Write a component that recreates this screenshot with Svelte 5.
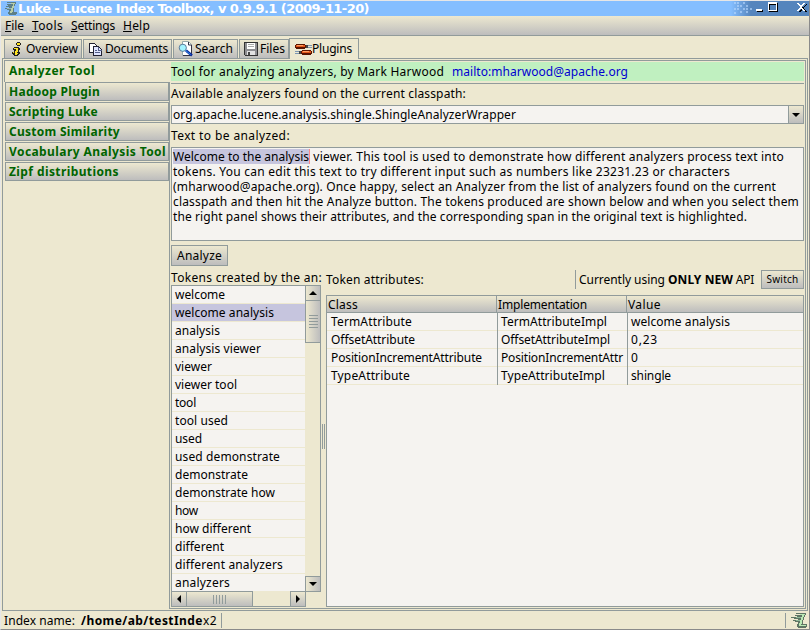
<script>
  const tokens = [
    ['welcome', 50], ['welcome analysis', 99], ['analysis', 45], ['analysis viewer', 86], ['viewer', 37],
    ['viewer tool', 62], ['tool', 21], ['tool used', 53], ['used', 27], ['used demonstrate', 105],
    ['demonstrate', 73], ['demonstrate how', 100], ['how', 23], ['how different', 76], ['different', 49],
    ['different analyzers', 108], ['analyzers', 55],
  ];
  const rows = [
    [['TermAttribute', 81], ['TermAttributeImpl', 106], ['welcome analysis', 99]],
    [['OffsetAttribute', 84], ['OffsetAttributeImpl', 109], ['0,23', 27]],
    [['PositionIncrementAttribute', 151], ['PositionIncrementAttr', 122], ['0', 8]],
    [['TypeAttribute', 79], ['TypeAttributeImpl', 104], ['shingle', 40]],
  ];
  const plugins = [
    ['Analyzer Tool', 86], ['Hadoop Plugin', 91], ['Scripting Luke', 89],
    ['Custom Similarity', 111], ['Vocabulary Analysis Tool', 157], ['Zipf distributions', 110],
  ];
  const lines = [
    [' viewer. This tool is used to demonstrate how different analyzers process text into', 474],
    ['tokens. You can edit this text to try different input such as numbers like 23231.23 or characters', 557],
    ['(mharwood@apache.org). Once happy, select an Analyzer from the list of analyzers found on the current', 603],
    ['classpath and then hit the Analyze button. The tokens produced are shown below and when you select them', 626],
    ['the right panel shows their attributes, and the corresponding span in the original text is highlighted.', 574],
  ];
  const menus = [['File', 19], ['Tools', 31], ['Settings', 44], ['Help', 27]];

  // Tracks a label so that it fills the given width.
  function fit(node, width) {
    const apply = () => {
      node.style.letterSpacing = '0px';
      const natural = node.getBoundingClientRect().width;
      node.style.letterSpacing = `${(width - natural) / node.textContent.length}px`;
    };
    apply();
    document.fonts?.ready.then(apply);
  }
</script>

{#snippet label(text, width)}<span class="t" use:fit={width}>{text}</span>{/snippet}

{#snippet logo(size, dark, mid, light)}
  <svg width={size} height={size} viewBox="0 0 16 16" shape-rendering="crispEdges">
    <path d="M5 0h10v2h-1v2h-1v3h-1v4h4v3h-1v1H7v-1H6v-3h1V9H4V8H2V7h5V6H3V5H0V4h6V3H4V2h5V1H5z" fill={dark} />
    <path d="M9 1h5v1h-1v2h-1v3h-1v4h-1v1h5v1H8v-3h1V7h1V4h1V2H9z" fill={light} />
    <path d="M5 4h5v1H5zM5 7h4v1H5z" fill={mid} />
  </svg>
{/snippet}

<div class="window">
  <header class="title">
    <div class="appicon">{@render logo(14, '#5c7f86', '#8fb3b5', '#b9cfa8')}</div>
    <b>{@render label('Luke - Lucene Index Toolbox, v 0.9.9.1 (2009-11-20)', 351)}</b>
    <svg class="controls" width="75" height="15" viewBox="0 0 75 15" shape-rendering="crispEdges">
      <path d="M0 1h2v2H0zM3 1h2v2H3zM9 1h2v2H9zM3 4h2v2H3zM6 4h2v2H6zM12 4h2v2h-2zM0 7h2v2H0zM3 7h2v2H3zM9 7h2v2H9zM12 7h2v2h-2zM16 7h2v2h-2zM0 11h2v2H0zM6 10h2v2H6zM12 10h2v2h-2z" fill="#b7d9ff" opacity=".6" />
      <path d="M23 9h6v2h-6zM35 2h9v9h-9z" fill="#000" />
      <path d="M22 8h6v2h-6zM34 1h9v9h-9z" fill="#fff" />
      <path d="M35 3h7v6h-7z" fill="#000" /><path d="M36 4h6v5h-6z" fill="#5585bd" />
      <g id="cross"><path d="M64 3h2v1h1v1h1v1h2V5h1V4h1V3h1v1h-1v1h-1v1h-1v2h1v1h1v1h1v1h-2v-1h-1V9h-2v1h-1v1h-2v-1h1V9h1V8h1V6h-1V5h-1V4h-1z" fill="#000" /></g>
      <path d="M63 2h2v1h1v1h2V3h1V2h2v1h-1v1h-1v1h-1v2h1v1h1v1h1v1h-2V9h-1V8h-2v1h-1v1h-2V9h1V8h1V7h1V5h-1V4h-1V3h-1z" fill="#fff" />
    </svg>
  </header>
  <nav class="menu">
    {#each menus as [name, w]}<span class="t" use:fit={w}><u>{name[0]}</u>{name.slice(1)}</span>{/each}
  </nav>

  <div class="tabs">
    <div class="tab overview">
      <svg width="16" height="16" viewBox="0 0 16 16" shape-rendering="crispEdges"><path d="M8 1h3v1h1v2h-1v1H8V4H7V2h1zM5 6h5v1h1v2h-1v2h1v2h-1v1H9v1H5v-1H4v-1H3v-2h2V9H4V7h1z" fill="#222" /><path d="M8 2h3v2H8zM5 7h4v1H5zM7 8h2v3H7zM6 10h2v4H6zM4 11h1v1H4zM8 12h1v1H8z" fill="#ffe420" /></svg>
      {@render label('Overview', 52)}
    </div>
    <div class="tab documents">
      <svg width="16" height="16" viewBox="0 0 16 16" shape-rendering="crispEdges"><path d="M1.500 2.500h5l2 2v7h-7z" fill="#fff" stroke="#223" /><path d="M5.500 5.500h5l3 3v6h-8z" fill="#dfe4ff" stroke="#223" /><path d="M10.500 6v3h3M7 9.500h2M7 11.500h5" fill="none" stroke="#55608a" /></svg>
      {@render label('Documents', 63)}
    </div>
    <div class="tab search">
      <svg width="16" height="16" viewBox="0 0 16 16"><path d="M4.500.5h6l3 3v11h-9z" fill="#fff" stroke="#9aa" /><path d="M10.500 1v3h3v10.500H5" fill="none" stroke="#334" /><circle cx="4.800" cy="6.800" r="3.600" fill="#a4f4ff" stroke="#5a7a9a" /><path d="M8 9.500l6 5" stroke="#0d2c9c" stroke-width="2.600" /><path d="M7.500 9.500l5 4" stroke="#2c8cf0" /></svg>
      {@render label('Search', 38)}
    </div>
    <div class="tab files">
      <svg width="16" height="16" viewBox="0 0 16 16" shape-rendering="crispEdges"><path d="M1.500 1.500h13v13H2.500l-1-1z" fill="#8e8e92" stroke="#333" /><path d="M4 2h8v6H4z" fill="#fff" /><path d="M4 10h8v4H4z" fill="#e2e2e2" /><path d="M5 11h2v3H5z" fill="#444" /><path d="M5 3.500h6M5 5.500h6" stroke="#aaa" /></svg>
      {@render label('Files', 25)}
    </div>
    <div class="tab plugins active">
      <svg width="17" height="16" viewBox="0 0 17 16" shape-rendering="crispEdges"><path d="M1 3h9v1h1v3h-1v1H1V7H0V4h1zM7 9h9v1h1v3h-1v1H7v-1H6v-3h1z" fill="#5a1400" /><path d="M1 4h9v2H1zM7 10h9v2H7z" fill="#e4561a" /><path d="M2 4h6v1H2zM8 10h6v1H8z" fill="#ffa060" /><path d="M11 4h2v3h-2zM4 10h2v3H4z" fill="#444" /><path d="M13 4.500h4M13 6.500h4M0 10.500h4M0 12.500h4" stroke="#7d97b3" /></svg>
      {@render label('Plugins', 40)}
    </div>
  </div>

  <main class="pane">
    <aside>
      {#each plugins as [name, w], i}
        <div class="plugin" class:on={i === 0}>{@render label(name, w)}</div>
      {/each}
    </aside>
    <section class="content">
      <div class="banner">{@render label('Tool for analyzing analyzers, by Mark Harwood', 273)}<a href="mailto:mharwood@apache.org">{@render label('mailto:mharwood@apache.org', 176)}</a></div>
      <div class="rule"></div>
      <div class="caption first">{@render label('Available analyzers found on the current classpath:', 295)}</div>
      <div class="combo"><div>{@render label('org.apache.lucene.analysis.shingle.ShingleAnalyzerWrapper', 343)}</div><button aria-label="Choose analyzer"><svg width="8" height="4" viewBox="0 0 8 4"><path d="M0 0h8L4 4z" /></svg></button></div>
      <div class="caption">{@render label('Text to be analyzed:', 119)}</div>
      <div class="textarea">
        {#each lines as [line, w], i}
          <div>{#if i === 0}<mark>{@render label('Welcome to the analysis', 136)}</mark>{/if}{@render label(line, w)}</div>
        {/each}
      </div>
      <button class="analyze">{@render label('Analyze', 45)}</button>
      <div class="split">
        <div class="left">
          <div class="cut">{@render label('Tokens created by the an:', 151)}</div>
          <div class="list">
            <div class="items">
              {#each tokens as [token, w], i}<div class="item" class:sel={i === 1}>{@render label(token, w)}</div>{/each}
            </div>
            <div class="vbar">
              <button aria-label="Up"><svg width="8" height="4" viewBox="0 0 8 4"><path d="M0 4h8L4 0z" /></svg></button>
              <div class="vthumb"><i></i></div>
              <button class="end" aria-label="Down"><svg width="8" height="4" viewBox="0 0 8 4"><path d="M0 0h8L4 4z" /></svg></button>
            </div>
            <div class="hbar">
              <button aria-label="Left"><svg width="4" height="8" viewBox="0 0 4 8"><path d="M4 0v8L0 4z" /></svg></button>
              <div class="hthumb"><i></i></div>
              <button class="end" aria-label="Right"><svg width="4" height="8" viewBox="0 0 4 8"><path d="M0 0v8l4-4z" /></svg></button>
            </div>
          </div>
        </div>
        <div class="grip"><i></i></div>
        <div class="right">
          <div class="bar">
            {@render label('Token attributes:', 98)}
            <div class="api">{@render label('Currently using ', 89)}<b>{@render label('ONLY NEW', 65)}</b>{@render label(' API', 21)}</div>
            <button class="switch">{@render label('Switch', 32)}</button>
          </div>
          <div class="table">
            <div class="tr head"><div>{@render label('Class', 30)}</div><div>{@render label('Implementation', 89)}</div><div>{@render label('Value', 33)}</div></div>
            {#each rows as row}
              <div class="tr">{#each row as [cell, w]}<div>{@render label(cell, w)}</div>{/each}</div>
            {/each}
          </div>
        </div>
      </div>
    </section>
  </main>

  <footer>
    <div class="index">{@render label('Index name:', 71)}<b class="t" use:fit={136}>/home/ab/testInde<span class="thin">x2</span></b></div>
    <div class="logo">{@render logo(16, '#5f7564', '#8fb898', '#b9e9b4')}</div>
  </footer>
</div>

<style>
  :global(body) { margin: 0; }
  * { box-sizing: border-box; }
  .window { width: 810px; height: 630px; display: flex; flex-direction: column; background: #ede8d0; border: 1px solid #e6e6e6; border-right-color: #8a8a8a; border-bottom-color: #8a8a8a; font: 12px/18px "Noto Sans", "Open Sans", sans-serif; color: #000; overflow: hidden; }
  .t { white-space: pre; display: inline-block; }
  b { font-weight: 700; }
  svg { display: block; flex: none; }
  button { font: inherit; color: inherit; padding: 0; margin: 0; border: 1px solid #919b9b; background: linear-gradient(#ede8d0, #bdbdbd); display: flex; align-items: center; justify-content: center; border-radius: 0; flex: none; }
  .title { height: 15px; flex: none; display: flex; align-items: center; background: linear-gradient(90deg, #84beff 0 730px, #5585bd 750px); color: #fff; font: 13px/15px "DejaVu Sans", sans-serif; }
  .appicon { width: 17px; padding-left: 2px; }
  .title b { flex: 1; }
  .menu { height: 20px; flex: none; display: flex; gap: 8px; padding-left: 4px; border-bottom: 1px solid #919b9b; background: linear-gradient(#ede8d0, #bdbdbd); line-height: 19px; }
  .tabs { height: 22px; flex: none; margin-left: 3px; display: flex; align-items: flex-end; position: relative; z-index: 1; }
  .tab { height: 19px; flex: none; display: flex; align-items: center; gap: 1px; border: 1px solid #919b9b; border-bottom: 0; background: linear-gradient(#ede8d0, #bdbdbd); margin-right: 1px; padding-left: 4px; line-height: 18px; }
  .overview { width: 78px; padding-left: 4px; }
  .documents { width: 89px; padding-left: 4px; }
  .search { width: 65px; padding-left: 4px; }
  .files { width: 50px; padding-left: 3px; gap: 1px; }
  .plugins { width: 70px; gap: 0; height: 21px; margin: 0 0 -1px -1px; padding: 0 0 1px 5px; background: #ede8d0; }
  .pane { height: 553px; flex: none; margin: 0 1px; border: 1px solid #919b9b; padding: 1px; display: flex; }
  aside { width: 165px; flex: none; }
  .plugin { height: 19px; margin: 0 0 1px 1px; border: 1px solid #919b9b; background: linear-gradient(#ede8d0, #bdbdbd); color: #006400; font: bold 12px/17px "Noto Sans", sans-serif; padding-left: 3px; }
  .plugin.on { height: 22px; margin: 0 -1px 0 0; position: relative; background: #ede8d0; border-width: 1px 0 0 1px; line-height: 20px; padding-left: 4px; }
  .content { flex: 1; min-width: 0; border: 1px solid #919b9b; padding: 1px; display: flex; flex-direction: column; }
  .banner { height: 19px; flex: none; background: #c0f0c0; line-height: 19px; }
  .banner a { color: #0000d0; margin-left: 8px; text-decoration: none; }
  .rule { height: 1px; flex: none; margin-top: 2px; background: #919b9b; }
  .caption { height: 23px; flex: none; line-height: 23px; }
  .caption.first { height: 21px; line-height: 19px; }
  .combo { height: 19px; flex: none; display: flex; border: 1px solid #919b9b; background: #f5f3f0; line-height: 17px; }
  .combo div { flex: 1; padding-left: 1px; }
  .combo button { width: 15px; border-width: 0 0 0 1px; }
  .textarea { height: 94px; flex: none; border: 1px solid #919b9b; background: #f5f3f0; padding: 1px; line-height: 15px; }
  .textarea div { height: 15px; display: flex; }
  mark { background: #c6c5de; color: inherit; height: 15px; width: 137px; border-right: 1px solid #f88; }
  .analyze { width: 57px; height: 21px; margin-top: 4px; }
  .split { flex: 1; min-height: 0; display: flex; }
  .left { width: 150px; flex: none; }
  .cut { height: 19px; line-height: 23px; white-space: nowrap; }
  .list { display: grid; grid-template: 306px 16px / 134px 16px; }
  .items { background: #f5f3f0; overflow: hidden; border: solid #919b9b; border-width: 1px 0 0 1px; }
  .item { height: 18px; line-height: 17px; padding-left: 3px; border-bottom: 1px solid #ede8d0; }
  .sel { background: #c6c5de; }
  .vbar { display: flex; flex-direction: column; box-shadow: inset -1px 0 #919b9b; margin-bottom: -1px; }
  .vbar button { height: 16px; background: linear-gradient(90deg, #ede8d0, #bdbdbd); }
  .vthumb { height: 43px; margin-top: -1px; border: 1px solid #919b9b; background: linear-gradient(90deg, #ede8d0, #bdbdbd); display: grid; place-items: center; }
  .vthumb i { width: 9px; height: 13px; background: repeating-linear-gradient(#919b9b 0 1px, transparent 1px 3px); }
  .hbar { display: flex; box-shadow: inset 0 -1px #919b9b; margin-right: -1px; }
  .hbar button { width: 16px; }
  .hthumb { width: 67px; margin-left: -1px; border: 1px solid #919b9b; background: linear-gradient(#ede8d0, #bdbdbd); display: grid; place-items: center; }
  .hthumb i { width: 13px; height: 9px; background: repeating-linear-gradient(90deg, #919b9b 0 1px, transparent 1px 3px); }
  .vbar .end { margin-top: auto; }
  .hbar .end { margin-left: auto; }
  .grip { width: 5px; display: flex; align-items: center; justify-content: center; }
  .grip i { width: 3px; height: 25px; border: solid #919b9b; border-width: 0 1px; }
  .right { flex: 1; min-width: 0; display: flex; flex-direction: column; }
  .bar { height: 29px; padding: 4px 0 6px; display: flex; line-height: 19px; }
  .api { margin-left: auto; border-left: 1px solid #919b9b; padding: 0 7px 0 3px; display: flex; }
  .switch { width: 43px; height: 19px; font-size: 10px; }
  .table { flex: 1; border: 1px solid #919b9b; background: #f5f3f0; }
  .tr { display: grid; grid-template-columns: 171px 130px 1fr; height: 18px; line-height: 17px; background: linear-gradient(#ede8d0, #ede8d0) 0 100% / 100% 1px no-repeat; }
  .tr div { padding-left: 4px; border-right: 1px solid #919b9b; }
  .tr div + div { padding-left: 3px; }
  .tr div:last-child { border-right: 0; }
  .tr.head { height: 17px; grid-template-columns: 170px 130px 1fr; background: linear-gradient(#ede8d0, #bdbdbd); border-bottom: 1px solid #919b9b; }
  .head div { padding-left: 1px; }
  .head div + div { padding-left: 1px; }
  footer { height: 18px; flex: none; display: flex; justify-content: space-between; line-height: 18px; }
  .index { display: flex; gap: 6px; padding: 0 4px 0 3px; height: 15px; margin-top: 2px; line-height: 15px; border-right: 1px solid #919b9b; }
  .thin { font-weight: 400; }
  .logo { height: 15px; margin: 2px 2px 0 0; padding-left: 5px; border-left: 1px solid #919b9b; }
</style>
